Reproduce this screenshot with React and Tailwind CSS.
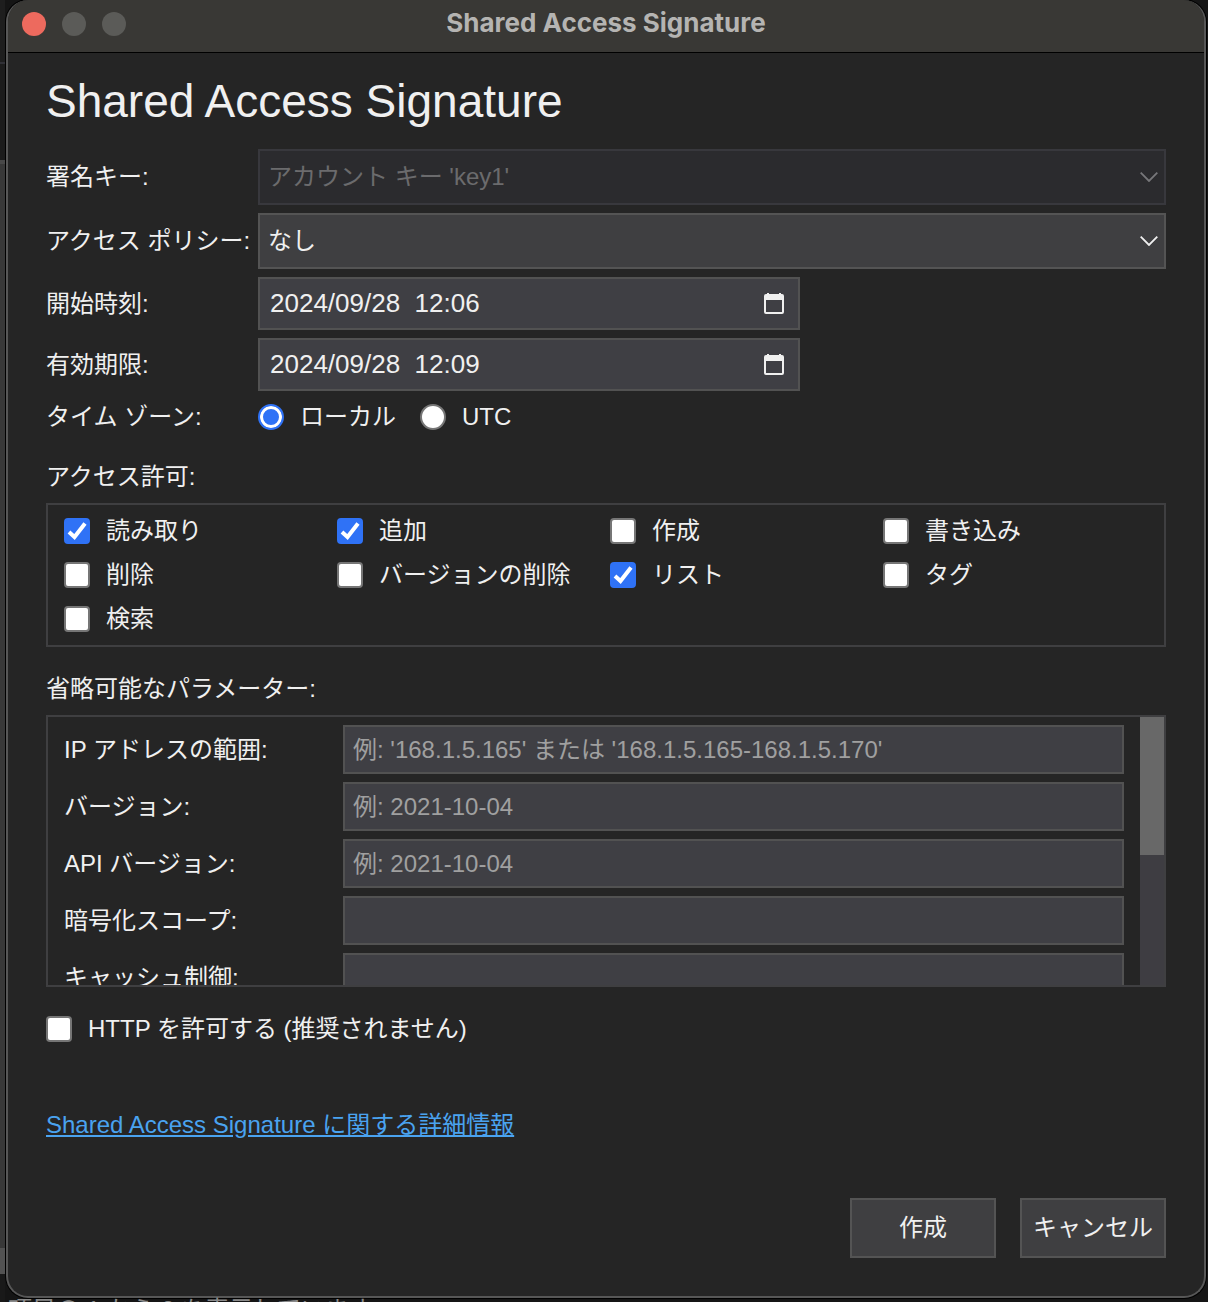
import React from "react";

const field =
  "w-full border-2 border-[#525252] bg-[#3f3f44] text-[#f0f0f0] outline-none placeholder:text-[#a0a0a0] placeholder:opacity-100";

function Chevron({ dim }) {
  return (
    <svg
      viewBox="0 0 18 10"
      className={`pointer-events-none absolute right-2 top-1/2 h-[10px] w-[18px] -translate-y-1/2 ${dim ? "text-[#77777a]" : "text-[#f0f0f0]"}`}
      fill="none"
      stroke="currentColor"
      strokeWidth="1.8"
    >
      <path d="M0.7 0.7 9 9 17.3 0.7" />
    </svg>
  );
}

function Select({ id, disabled, value }) {
  return (
    <div className="relative">
      <select
        id={id}
        disabled={disabled}
        className={`block h-14 w-full appearance-none border-2 px-2 leading-8 opacity-100 outline-none ${
          disabled
            ? "border-[#38383d] bg-[#2b2b2e] text-[#6b6b6d]"
            : "border-[#545454] bg-[#3f3f41] text-[#f0f0f0]"
        }`}
      >
        <option>{value}</option>
      </select>
      <Chevron dim={disabled} />
    </div>
  );
}

function DateField({ id, value }) {
  return (
    <div className="relative w-[542px] max-w-full">
      <input id={id} type="text" defaultValue={value} className={`${field} block h-[53px] px-[10px] text-[26px]`} />
      <svg viewBox="0 0 20 22" className="pointer-events-none absolute right-4 top-4 h-[22px] w-5 text-[#f0f0f0]">
        <path
          fill="currentColor"
          fillRule="evenodd"
          d="M3 0h2v1h10V0h2v1h1a2 2 0 0 1 2 2v16a2 2 0 0 1-2 2H2a2 2 0 0 1-2-2V3a2 2 0 0 1 2-2h1zM2 7v12h16V7z"
        />
      </svg>
    </div>
  );
}

function Check({ label, checked }) {
  return (
    <label className="flex h-11 items-center gap-4">
      <span className="relative size-[26px] shrink-0">
        <input
          type="checkbox"
          defaultChecked={checked}
          className="peer block size-[26px] appearance-none rounded border-2 border-[#767676] bg-white checked:border-[#2f72f6] checked:bg-[#2f72f6]"
        />
        <svg viewBox="0 0 26 26" className="pointer-events-none absolute inset-0 hidden peer-checked:block" fill="none" stroke="#fff" strokeWidth="4">
          <path d="M5 14 10.5 19 21 5.5" />
        </svg>
      </span>
      <span className="whitespace-nowrap">{label}</span>
    </label>
  );
}

function Radio({ label, checked }) {
  return (
    <label className="flex h-[46px] items-center gap-4">
      <input
        type="radio"
        name="timezone"
        defaultChecked={checked}
        className="size-[26px] shrink-0 appearance-none rounded-full border-2 border-[#767676] bg-white checked:border-[#2f72f6] checked:bg-[#2f72f6] checked:shadow-[inset_0_0_0_3px_#fff]"
      />
      <span>{label}</span>
    </label>
  );
}

const permissions = [
  ["読み取り", true],
  ["追加", true],
  ["作成", false],
  ["書き込み", false],
  ["削除", false],
  ["バージョンの削除", false],
  ["リスト", true],
  ["タグ", false],
  ["検索", false],
];

const parameters = [
  ["ip", "IP アドレスの範囲:", "例: '168.1.5.165' または '168.1.5.165-168.1.5.170'"],
  ["version", "バージョン:", "例: 2021-10-04"],
  ["api", "API バージョン:", "例: 2021-10-04"],
  ["scope", "暗号化スコープ:", ""],
  ["cache", "キャッシュ制御:", ""],
];

const button = "h-[60px] w-[146px] border-2 border-[#545454] bg-[#3f3f41] text-[#f0f0f0]";

export default function App() {
  return (
    <div className="relative flex min-h-screen flex-col overflow-hidden bg-[#151515] pl-[6px] pr-[2px] font-['Liberation_Sans','Noto_Sans_CJK_JP',sans-serif] text-2xl leading-8 text-[#f0f0f0]">
      <div className="absolute left-0 top-0 flex h-full w-[5px] flex-col">
        <div className="h-[62px] bg-[#1e1e1e]" />
        <div className="h-0.5 bg-[#303036]" />
        <div className="h-24 bg-[#1c1c1c]" />
        <div className="h-1 bg-[#484848]" />
        <div className="grow bg-[#383838]" />
        <div className="h-[26px] bg-[#525252]" />
        <div className="h-7 bg-[#191919]" />
      </div>
      <main className="relative overflow-hidden rounded-[22px] border-2 border-t-0 border-[#575757] bg-[#252525] pb-[38px] shadow-[0_0_0_1px_#000]">
        <header className="relative flex h-[53px] items-center justify-center border-b border-black bg-[#393835] pb-1.5">
          <div className="absolute left-[14px] top-3 flex gap-4">
            <button aria-label="閉じる" className="size-6 rounded-full bg-[#ed6a5e]" />
            <button aria-label="しまう" className="size-6 rounded-full bg-[#5b5b58]" />
            <button aria-label="拡大" className="size-6 rounded-full bg-[#5b5b58]" />
          </div>
          <span className="font-['Inter',sans-serif] text-[26px] font-bold text-[#b5b4b2]">Shared Access Signature</span>
        </header>

        <div className="px-[38px]">
          <h1 className="mt-[18px] text-[46px] leading-[60px]">Shared Access Signature</h1>

          <div className="mt-[18px] grid grid-cols-[204px_1fr] items-center gap-x-2 gap-y-2">
            <label htmlFor="key" className="whitespace-nowrap">署名キー:</label>
            <Select id="key" disabled value="アカウント キー 'key1'" />
            <label htmlFor="policy" className="whitespace-nowrap">アクセス ポリシー:</label>
            <Select id="policy" value="なし" />
            <label htmlFor="start">開始時刻:</label>
            <DateField id="start" value="2024/09/28  12:06" />
            <label htmlFor="expiry">有効期限:</label>
            <DateField id="expiry" value="2024/09/28  12:09" />
          </div>
          <fieldset className="grid grid-cols-[204px_1fr] items-center gap-x-2 pt-[3px]">
            <legend className="float-left contents">タイム ゾーン:</legend>
            <div className="flex gap-6">
              <Radio label="ローカル" checked />
              <Radio label="UTC" />
            </div>
          </fieldset>

          <h2 className="mt-[21px]">アクセス許可:</h2>
          <div className="mt-[10px] grid grid-cols-4 border-2 border-[#3f3f41] py-1 pl-4 pr-2">
            {permissions.map(([label, checked]) => (
              <Check key={label} label={label} checked={checked} />
            ))}
          </div>

          <h2 className="mt-[26px]">省略可能なパラメーター:</h2>
          <div className="mt-[10px] flex h-[272px] border-2 border-[#3f3f41]">
            <div className="flex grow flex-col gap-2 overflow-hidden px-4 pt-2">
              {parameters.map(([id, label, placeholder]) => (
                <div key={id} className="grid shrink-0 grid-cols-[271px_1fr] items-center gap-2">
                  <label htmlFor={id}>{label}</label>
                  <input id={id} type="text" placeholder={placeholder} className={`${field} h-[49px] px-2`} />
                </div>
              ))}
            </div>
            <div className="w-6 shrink-0 bg-[#3e3d42]">
              <div className="h-[138px] bg-[#686868]" />
            </div>
          </div>

          <div className="mt-5">
            <Check label="HTTP を許可する (推奨されません)" />
          </div>
          <p className="mt-[58px]">
            <a href="#" className="text-[#4aa3f0] underline">Shared Access Signature に関する詳細情報</a>
          </p>
          <div className="mt-[57px] flex justify-end gap-6">
            <button className={button}>作成</button>
            <button className={button}>キャンセル</button>
          </div>
        </div>
      </main>
      <p className="absolute left-2 top-[1294px] whitespace-nowrap text-[#8a8a8a]">項目の 1 から 2 を表示しています</p>
    </div>
  );
}
